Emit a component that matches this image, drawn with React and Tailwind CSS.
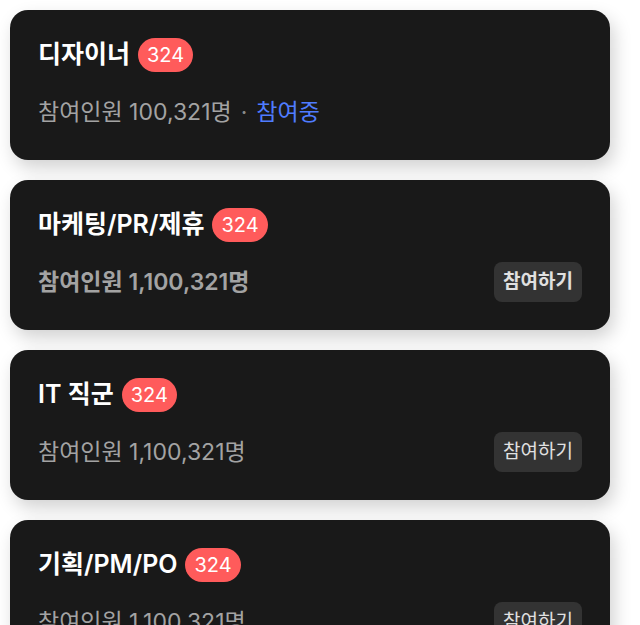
const font = { fontFamily: 'Inter, "Noto Sans CJK KR", sans-serif' };

const groups = [
  { title: '디자이너', count: 324, people: '100,321', joined: true, bold: false },
  { title: '마케팅/PR/제휴', count: 324, people: '1,100,321', joined: false, bold: true },
  { title: 'IT 직군', count: 324, people: '1,100,321', joined: false, bold: false },
  { title: '기획/PM/PO', count: 324, people: '1,100,321', joined: false, bold: false },
];

function GroupCard({ group }) {
  return (
    <div className="w-[600px] h-[150px] shrink-0 rounded-[18px] bg-[#191919] px-7 pt-7 shadow-[4px_8px_18px_rgba(0,0,0,0.18)]">
      {/* Title */}
      <div className="flex h-[34px] items-center gap-2">
        <h3 className="text-[25px] font-semibold text-white">{group.title}</h3>
        <span className="flex h-[34px] items-center rounded-full bg-[#ff5b5b] px-[9px] text-[20px] text-white">
          {group.count}
        </span>
      </div>

      {/* Members */}
      <div className="mt-5 flex h-10 items-center justify-between">
        <p className={`text-[23px] text-[#a3a3a3] ${group.bold ? 'font-semibold' : 'font-normal'}`}>
          참여인원 {group.people}명
          {group.joined && (
            <>
              <span className="mx-[9px] text-[#8a8a8a]">·</span>
              <span className="text-[#4f7cff]">참여중</span>
            </>
          )}
        </p>
        {!group.joined && (
          <button
            className={`h-10 rounded-lg bg-[#333333] px-[9px] text-[19px] text-[#e0e0e0] ${group.bold ? 'font-semibold' : 'font-normal'}`}
          >
            참여하기
          </button>
        )}
      </div>
    </div>
  );
}

export default function App() {
  return (
    <div style={font} className="flex h-[625px] flex-col gap-5 overflow-hidden bg-white p-[10px]">
      {groups.map((g) => (
        <GroupCard key={g.title} group={g} />
      ))}
    </div>
  );
}
